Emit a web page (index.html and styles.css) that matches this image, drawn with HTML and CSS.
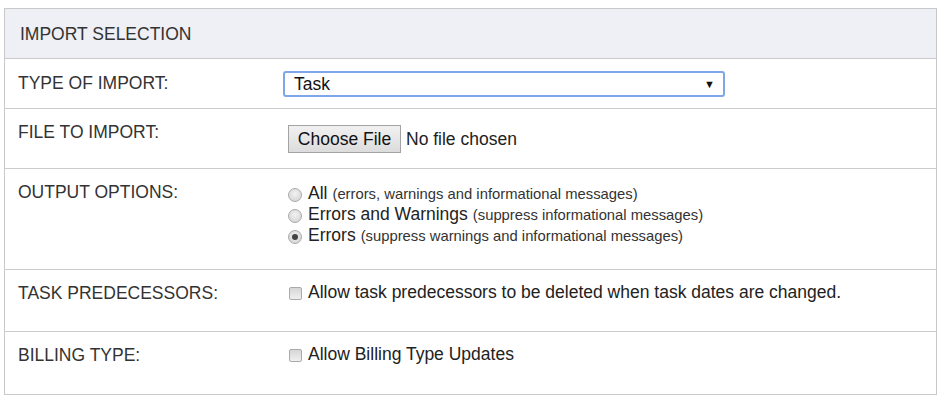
FILE: index.html
```html
<!DOCTYPE html>
<html>
<head>
<meta charset="utf-8">
<link rel="stylesheet" href="styles.css">
</head>
<body>
<div class="panel">
  <div class="header">IMPORT SELECTION</div>
  <div class="row row-type">
    <div class="label">TYPE OF IMPORT:</div>
    <div class="value">
      <div class="select"><span>Task</span><span class="arrow">&#9660;</span></div>
    </div>
  </div>
  <div class="row row-file">
    <div class="label">FILE TO IMPORT:</div>
    <div class="value file">
      <span class="file-btn">Choose File</span><span class="file-name">No file chosen</span>
    </div>
  </div>
  <div class="row row-output">
    <div class="label">OUTPUT OPTIONS:</div>
    <div class="value options">
      <div class="option"><span class="radio"></span><span class="main">All</span><span class="note">(errors, warnings and informational messages)</span></div>
      <div class="option"><span class="radio"></span><span class="main">Errors and Warnings</span><span class="note">(suppress informational messages)</span></div>
      <div class="option"><span class="radio checked"></span><span class="main">Errors</span><span class="note">(suppress warnings and informational messages)</span></div>
    </div>
  </div>
  <div class="row row-pred">
    <div class="label">TASK PREDECESSORS:</div>
    <div class="value check"><span class="checkbox"></span><span>Allow task predecessors to be deleted when task dates are changed.</span></div>
  </div>
  <div class="row row-billing">
    <div class="label">BILLING TYPE:</div>
    <div class="value check"><span class="checkbox"></span><span>Allow Billing Type Updates</span></div>
  </div>
</div>
</body>
</html>
```

FILE: styles.css
```css
html, body {
  margin: 0;
  background: #ffffff;
}
body {
  padding: 8px 0 0 4px;
  font-family: "Liberation Sans", Arial, sans-serif;
  font-size: 17.5px;
  color: #333333;
}
.panel {
  width: 931px;
  border: 1px solid #c9c9c9;
}
.header {
  height: 50px;
  box-sizing: border-box;
  padding: 15px 0 0 15px;
  line-height: 20px;
  background: #eff0f5;
  border-bottom: 1px solid #c9c9c9;
}
.row {
  display: grid;
  grid-template-columns: 278px 1fr;
  border-bottom: 1px solid #cccccc;
  line-height: 20px;
}
.row:last-child {
  border-bottom: none;
}
.label {
  padding: 13px 0 0 13px;
}
.value {
  padding-top: 12px;
}
.row-type { height: 49px; }
.row-file { height: 59px; }
.row-output { height: 100px; }
.row-pred { height: 61px; }
.row-billing { height: 62px; }

.row-type .label { padding-top: 14px; }
.row-type .value { padding-top: 12px; }
.select {
  width: 442px;
  height: 26px;
  box-sizing: border-box;
  border: 2px solid #7ea6e8;
  border-radius: 3px;
  display: flex;
  align-items: center;
  justify-content: space-between;
  padding: 0 8px 0 9px;
  color: #111;
}
.select .arrow {
  font-size: 11px;
  color: #111;
}

.row-file .value { padding-top: 16px; }
.file {
  display: flex;
  align-items: center;
  height: 28px;
  box-sizing: content-box;
}
.file-btn {
  margin-left: 5px;
  height: 28px;
  width: 113px;
  box-sizing: border-box;
  border: 1px solid #a3a3a3;
  background: linear-gradient(#f1f1f1, #dcdcdc);
  color: #111;
  display: flex;
  align-items: center;
  justify-content: center;
}
.file-name {
  margin-left: 5px;
  color: #222;
}

.row-output .value { padding-top: 13px; }
.options {
  display: flex;
  flex-direction: column;
}
.option {
  display: flex;
  align-items: center;
  height: 21px;
  white-space: nowrap;
}
.radio {
  width: 14px;
  height: 14px;
  box-sizing: border-box;
  border-radius: 50%;
  border: 1px solid #aaaaaa;
  background: radial-gradient(circle at 50% 40%, #f2f2f2, #cfcfcf);
  margin: 4px 6px 0 5px;
  display: flex;
  align-items: center;
  justify-content: center;
  flex: none;
}
.radio.checked::after {
  content: "";
  width: 6px;
  height: 6px;
  border-radius: 50%;
  background: #444444;
}
.main {
  font-size: 17.5px;
  color: #222;
}
.note {
  font-size: 14.8px;
  color: #333;
  padding-top: 2px;
  margin-left: 5px;
}

.check {
  display: flex;
  align-items: flex-start;
  color: #222;
}
.checkbox {
  width: 13px;
  height: 13px;
  box-sizing: border-box;
  border: 1px solid #aaaaaa;
  border-radius: 2px;
  background: linear-gradient(#d6d6d6, #efefef);
  margin: 5px 6px 0 6px;
  flex: none;
}
```
